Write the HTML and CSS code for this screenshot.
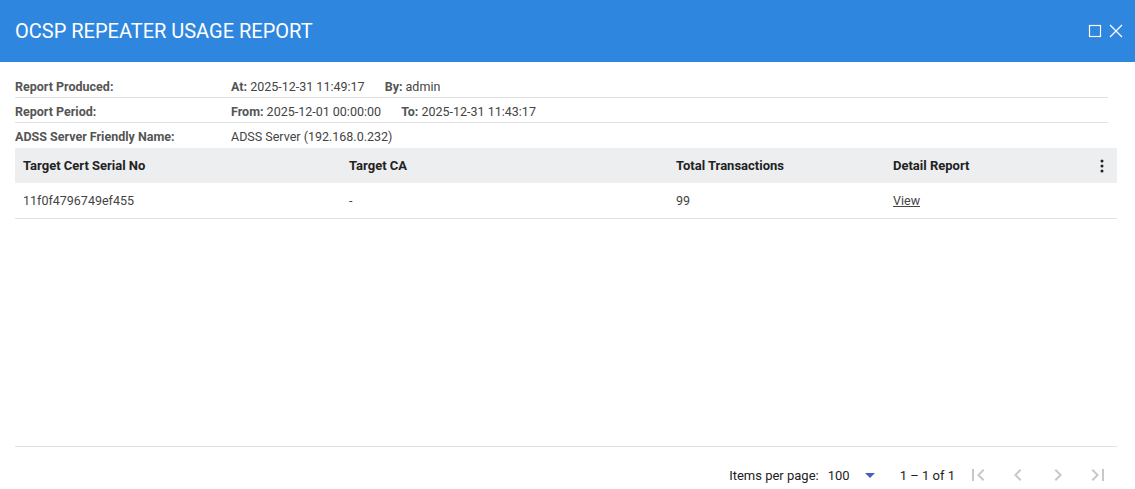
FILE: index.html
```html
<!DOCTYPE html>
<html lang="en">
<head>
  <meta charset="UTF-8">
  <title>OCSP Repeater Usage Report</title>
  <link rel="stylesheet" href="styles.css">
</head>
<body>
  <div class="dialog">
    <header class="dlg-head">
      <h1>OCSP REPEATER USAGE REPORT</h1>
      <div class="dlg-actions">
        <svg width="14" height="14" viewBox="0 0 14 14"><rect x="1.5" y="1.5" width="11" height="11" fill="none" stroke="#fff" stroke-width="1.2"/></svg>
        <svg width="14" height="14" viewBox="0 0 14 14"><path d="M1 1 L13 13 M13 1 L1 13" stroke="#fff" stroke-width="1.3"/></svg>
      </div>
    </header>

    <div class="content">
      <div class="info">
        <div class="info-row">
          <span class="lbl">Report Produced:</span>
          <span class="val"><b>At:</b> 2025-12-31 11:49:17 <b class="gap">By:</b> admin</span>
        </div>
        <div class="info-row">
          <span class="lbl">Report Period:</span>
          <span class="val"><b>From:</b> 2025-12-01 00:00:00 <b class="gap">To:</b> 2025-12-31 11:43:17</span>
        </div>
        <div class="info-row last">
          <span class="lbl">ADSS Server Friendly Name:</span>
          <span class="val">ADSS Server (192.168.0.232)</span>
        </div>
      </div>

      <div class="table">
        <div class="tr th">
          <span>Target Cert Serial No</span>
          <span>Target CA</span>
          <span>Total Transactions</span>
          <span>Detail Report</span>
          <span class="kebab">
            <svg width="4" height="14" viewBox="0 0 4 14"><circle cx="2" cy="2" r="1.5"/><circle cx="2" cy="7" r="1.5"/><circle cx="2" cy="12" r="1.5"/></svg>
          </span>
        </div>
        <div class="tr td">
          <span>11f0f4796749ef455</span>
          <span>-</span>
          <span>99</span>
          <span><a href="#">View</a></span>
          <span></span>
        </div>
      </div>

      <div class="spacer"></div>

      <div class="paginator">
        <span class="ipp">Items per page:</span>
        <span class="select">100 <svg width="10" height="5" viewBox="0 0 10 5"><path d="M0 0 L10 0 L5 5 Z" fill="#4a5cc0"/></svg></span>
        <span class="range">1 – 1 of 1</span>
        <span class="nav">
          <span class="nav-btn"><svg width="24" height="24" viewBox="0 0 24 24"><path d="M18.41 16.59L13.82 12l4.59-4.59L17 6l-6 6 6 6zM6 6h2v12H6z"/></svg></span>
          <span class="nav-btn"><svg width="24" height="24" viewBox="0 0 24 24"><path d="M15.41 16.59L10.83 12l4.58-4.59L14 6l-6 6 6 6 1.41-1.41z"/></svg></span>
          <span class="nav-btn"><svg width="24" height="24" viewBox="0 0 24 24"><path d="M8.59 16.59L13.17 12 8.59 7.41 10 6l6 6-6 6-1.41-1.41z"/></svg></span>
          <span class="nav-btn"><svg width="24" height="24" viewBox="0 0 24 24"><path d="M5.59 7.41L10.18 12l-4.59 4.59L7 18l6-6-6-6zM16 6h2v12h-2z"/></svg></span>
        </span>
      </div>
    </div>
  </div>
</body>
</html>
```

FILE: styles.css
```css
body {
  margin: 0;
  font-family: Roboto, "Liberation Sans", sans-serif;
  background: #fff;
  color: #444;
  overflow: hidden;
}

.dialog {
  height: 503px;
  display: flex;
  flex-direction: column;
}

.dlg-head {
  height: 62px;
  background: #2e86de;
  display: flex;
  align-items: center;
  justify-content: space-between;
  padding: 0 15px;
  flex-shrink: 0;
}

.dlg-head h1 {
  margin: 0;
  font-size: 20px;
  font-weight: 400;
  color: #fff;
}

.dlg-actions {
  display: flex;
  gap: 7px;
  margin-right: -3px;
}

.content {
  flex: 1;
  display: flex;
  flex-direction: column;
  padding: 11px 18px 0 15px;
}

/* info block */
.info {
  margin-right: 9px;
}

.info-row {
  display: flex;
  height: 22px;
  padding-top: 2px;
  align-items: center;
  border-bottom: 1px solid #e2e2e2;
  font-size: 12.5px;
}

.info-row.last {
  height: 23px;
  border-bottom: none;
}

.lbl {
  width: 216px;
  font-weight: 700;
  color: #555;
}

.val b {
  color: #555;
}

.val .gap {
  margin-left: 17px;
}

/* table */
.tr {
  display: grid;
  grid-template-columns: 326px 327px 217px 1fr 30px;
  align-items: center;
}

.tr span {
  padding-left: 8px;
}

.th {
  height: 35px;
  background: #eceef0;
  font-size: 13px;
  font-weight: 700;
  color: #222;
}

.tr .kebab {
  display: flex;
  justify-content: center;
  fill: #222;
  padding-left: 0;
}

.td {
  height: 35px;
  border-bottom: 1px solid #e2e2e2;
  font-size: 12.5px;
  color: #444;
}

.td a {
  color: #444;
  text-decoration: underline;
}

.spacer {
  flex: 1;
  border-bottom: 1px solid #e2e2e2;
}

/* paginator */
.paginator {
  height: 56px;
  flex-shrink: 0;
  display: flex;
  align-items: center;
  justify-content: flex-end;
  font-size: 13px;
  color: #222;
  margin-right: -1px;
}

.ipp {
  margin-right: 9px;
}

.select {
  display: flex;
  align-items: center;
  justify-content: space-between;
  width: 47px;
  margin-right: 25px;
}

.range {
  margin-right: 3px;
}

.nav {
  display: flex;
  fill: #c8c8c8;
}

.nav-btn {
  width: 40px;
  height: 40px;
  display: flex;
  align-items: center;
  justify-content: center;
}
```
